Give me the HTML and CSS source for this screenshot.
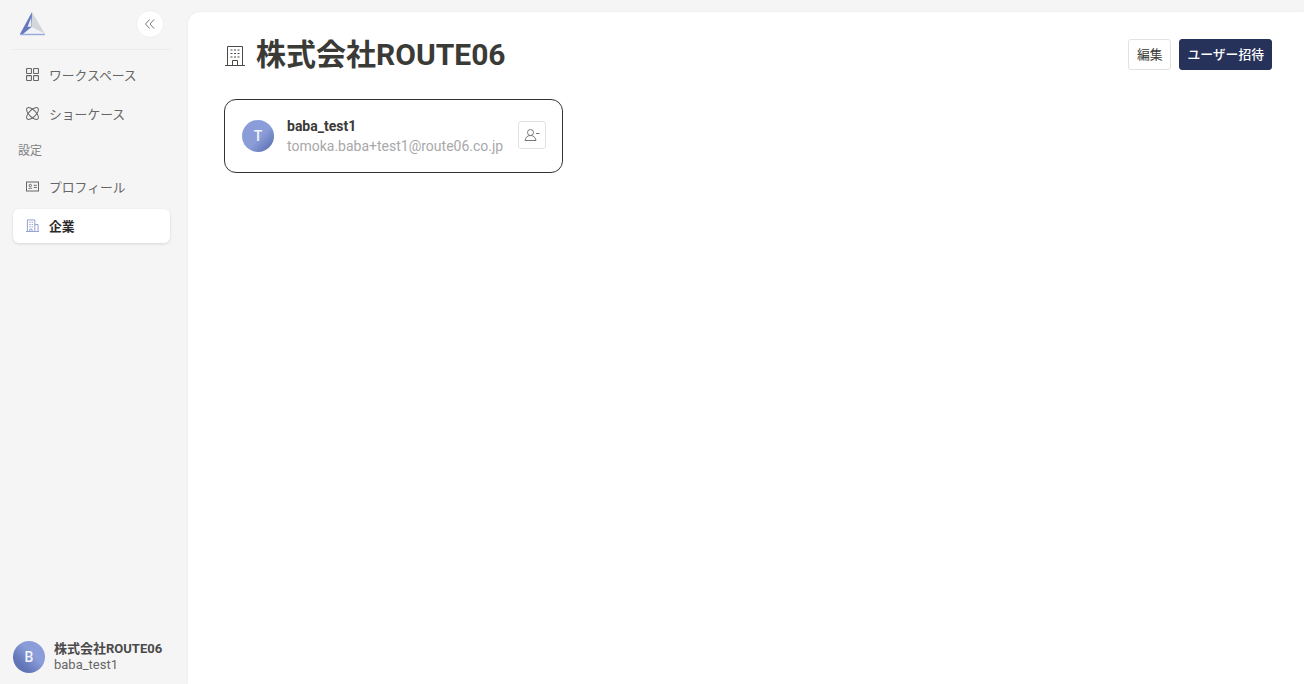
FILE: index.html
```html
<!DOCTYPE html>
<html lang="ja">
<head>
  <meta charset="UTF-8">
  <title>株式会社ROUTE06</title>
  <link rel="stylesheet" href="styles.css">
</head>
<body>
<div class="app">
  <aside class="sidebar">
    <div class="sidebar-top">
      <svg class="logo" viewBox="0 0 26 24" xmlns="http://www.w3.org/2000/svg">
        <path d="M13 0 L26 22 L12.500 15 Z" fill="#d3d6da"></path>
        <path d="M12.500 15 L26 22 H4 Z" fill="#f1f2f6"></path>
        <path d="M13 0 L1 22 H4 L12.500 15 Z" fill="#6478c0"></path>
        <path d="M12 6 L8.500 15 L12.300 14.500 Z" fill="#eef0f6"></path>
        <path d="M1 22.500 H26" stroke="#98a8dc" stroke-width="1.400"></path>
      </svg>
      <button class="collapse-button" title="閉じる">
        <svg width="12" height="12" viewBox="0 0 12 12" fill="none" stroke="#777" stroke-width="1">
          <path d="M5.500 1.500 1.500 6l4 4.500"></path>
          <path d="M10 1.500 6 6l4 4.500"></path>
        </svg>
      </button>
    </div>
    <nav class="nav">
      <a class="nav-item">
        <svg class="nav-icon" viewBox="0 0 12 12" fill="none" stroke="#666" stroke-width="1">
          <rect x="0.500" y="0.500" width="4.500" height="4.500" rx="0.500"></rect>
          <rect x="7" y="0.500" width="4.500" height="4.500" rx="0.500"></rect>
          <rect x="0.500" y="7" width="4.500" height="4.500" rx="0.500"></rect>
          <rect x="7" y="7" width="4.500" height="4.500" rx="0.500"></rect>
        </svg>
        ワークスペース
      </a>
      <a class="nav-item">
        <svg class="nav-icon" viewBox="0 0 12 12" fill="none" stroke="#666" stroke-width="0.900">
          <ellipse cx="6" cy="6" rx="7" ry="3.200" transform="rotate(45 6 6)"></ellipse>
          <ellipse cx="6" cy="6" rx="7" ry="3.200" transform="rotate(-45 6 6)"></ellipse>
        </svg>
        ショーケース
      </a>
      <div class="nav-label">設定</div>
      <a class="nav-item">
        <svg class="nav-icon" viewBox="0 0 13 12" fill="none" stroke="#666" stroke-width="1">
          <rect x="0.500" y="1.500" width="12" height="9"></rect>
          <circle cx="4.300" cy="5" r="1.200"></circle>
          <path d="M2.500 8.500c.3-1.200 3.300-1.200 3.600 0"></path>
          <path d="M7.800 4.800h3M7.800 7h3"></path>
        </svg>
        プロフィール
      </a>
      <a class="nav-item active">
        <svg class="nav-icon" viewBox="0 0 14 14" fill="none" stroke="#8e9bcb" stroke-width="1">
          <path d="M0 13.500h14"></path>
          <path d="M1.500 13.500V1h8v12.500"></path>
          <path d="M9.500 6h3.500v7.500"></path>
          <path d="M3.500 3.500h1.500M6 3.500h1.500M3.500 6h1.500M6 6h1.500M3.500 8.500h1.500M6 8.500h1.500"></path>
          <path d="M4 13.500v-2.500h2.500v2.500"></path>
        </svg>
        企業
      </a>
    </nav>
    <div class="account">
      <div class="avatar avatar-b">B</div>
      <div class="account-text">
        <div class="account-company">株式会社ROUTE06</div>
        <div class="account-user">baba_test1</div>
      </div>
    </div>
  </aside>

  <main class="main">
    <div class="page-header">
      <h1 class="page-title">
        <svg class="title-icon" viewBox="0 0 22 22" fill="none" stroke="#4a4a46" stroke-width="1">
          <path d="M1 20.500h20"></path>
          <path d="M3.500 20.500V1.500h15v19"></path>
          <path d="M6.500 5h2M10 5h2M13.500 5h2M6.500 8.500h2M10 8.500h2M13.500 8.500h2M6.500 12h2M10 12h2M13.500 12h2"></path>
          <path d="M8.500 20.500V15.500h5v5"></path>
        </svg>
        株式会社ROUTE06
      </h1>
      <div class="header-actions">
        <button class="btn">編集</button>
        <button class="btn btn-primary">ユーザー招待</button>
      </div>
    </div>

    <div class="member-card">
      <div class="avatar avatar-t">T</div>
      <div class="member-text">
        <div class="member-name">baba_test1</div>
        <div class="member-mail">tomoka.baba+test1@route06.co.jp</div>
      </div>
      <button class="icon-button" title="削除">
        <svg width="16" height="14" viewBox="0 0 16 14" fill="none" stroke="#777" stroke-width="1">
          <circle cx="6.500" cy="4.500" r="3"></circle>
          <path d="M1 12.500c.6-3.300 2.500-5 5.500-5s4.900 1.700 5.500 5Z"></path>
          <path d="M12 5.500h3.500"></path>
        </svg>
      </button>
    </div>
  </main>
</div>
</body>
</html>
```

FILE: styles.css
```css
:root {
  --sidebar: #f5f5f5;
  --text: #3a3a37;
  --muted: #666666;
  --border: #e2e2e2;
  --navy: #27325a;
}

* {
  margin: 0;
  padding: 0;
  box-sizing: border-box;
}

body {
  font-family: Roboto, "Noto Sans CJK JP", sans-serif;
  color: var(--text);
  background-color: var(--sidebar);
  height: 684px;
  overflow: hidden;
}

.app {
  display: flex;
  height: 684px;
}

.sidebar {
  display: flex;
  flex-direction: column;
  width: 188px;
  flex-shrink: 0;
  padding: 0 17px 11px 12px;
}

.sidebar-top {
  display: flex;
  align-items: center;
  justify-content: space-between;
  height: 50px;
  padding: 0 7px 2px 7px;
  border-bottom: 1px solid #ebebeb;
}

.logo {
  width: 26px;
  height: 24px;
}

.collapse-button {
  display: flex;
  align-items: center;
  justify-content: center;
  width: 28px;
  height: 28px;
  border: 1px solid #efefef;
  border-radius: 50%;
  background-color: #ffffff;
}

.nav {
  display: flex;
  flex-direction: column;
  gap: 5px;
  margin-top: 7px;
}

.nav-item {
  display: flex;
  align-items: center;
  gap: 10px;
  height: 34px;
  padding: 0 14px;
  font-size: 12.8px;
  color: var(--muted);
  border-radius: 6px;
}

.nav-item.active {
  margin: 1px 1px 0;
  padding-left: 13px;
  padding-bottom: 2px;
  color: #2a2a2a;
  font-weight: 700;
  background-color: #ffffff;
  box-shadow: 0 1px 3px rgba(0, 0, 0, 0.12);
}

.nav-icon {
  width: 13px;
  height: 13px;
  flex-shrink: 0;
}

.nav-label {
  height: 29px;
  padding: 7px 0 0 6px;
  font-size: 12px;
  line-height: 18px;
  color: #808080;
}

.account {
  display: flex;
  align-items: center;
  gap: 9px;
  margin-top: auto;
  margin-left: 1px;
}

.avatar {
  display: flex;
  align-items: center;
  justify-content: center;
  width: 32px;
  height: 32px;
  flex-shrink: 0;
  border-radius: 50%;
  font-size: 14px;
  font-weight: 500;
  color: #f4f5fb;
}

.avatar-b {
  background: linear-gradient(45deg, #6074b6 25%, #8a9dd9 60%);
}

.avatar-t {
  background: linear-gradient(135deg, #8a9dd9 55%, #6074b6 88%);
}

.account-company {
  font-size: 13px;
  line-height: 16px;
  font-weight: 700;
  color: #4a4a4a;
  white-space: nowrap;
}

.account-user {
  font-size: 13px;
  line-height: 16px;
  color: #666666;
}

.main {
  flex: 1;
  margin-top: 12px;
  padding: 27px 32px 0 36px;
  background-color: #ffffff;
  border-top-left-radius: 12px;
  box-shadow: 0 0 2px rgba(0, 0, 0, 0.08);
}

.page-header {
  display: flex;
  align-items: center;
  justify-content: space-between;
  height: 31px;
}

.page-title {
  display: flex;
  align-items: center;
  gap: 10px;
  font-size: 30px;
  font-weight: 700;
  line-height: 31px;
  color: var(--text);
}

.title-icon {
  width: 22px;
  height: 22px;
  margin-top: 2px;
}

.header-actions {
  display: flex;
  gap: 8px;
}

.btn {
  height: 31px;
  padding: 0 8px 2px;
  font-family: inherit;
  font-size: 12.8px;
  font-weight: 400;
  color: var(--text);
  background-color: #ffffff;
  border: 1px solid var(--border);
  border-radius: 3px;
}

.btn-primary {
  padding: 0 7px 2px;
  color: #ffffff;
  font-weight: 500;
  background-color: var(--navy);
  border-color: var(--navy);
}

.member-card {
  display: flex;
  align-items: center;
  gap: 13px;
  width: 339px;
  height: 74px;
  margin-top: 29px;
  padding: 0 16px 0 17px;
  border: 1px solid #333333;
  border-radius: 12px;
}

.member-text {
  flex: 1;
  min-width: 0;
}

.member-name {
  font-size: 14px;
  line-height: 20px;
  font-weight: 700;
  color: var(--text);
}

.member-mail {
  font-size: 14px;
  line-height: 20px;
  color: #a8a8a8;
  white-space: nowrap;
}

.icon-button {
  display: flex;
  align-items: center;
  justify-content: center;
  width: 28px;
  height: 28px;
  margin-bottom: 2px;
  flex-shrink: 0;
  background-color: #ffffff;
  border: 1px solid var(--border);
  border-radius: 3px;
}
```
